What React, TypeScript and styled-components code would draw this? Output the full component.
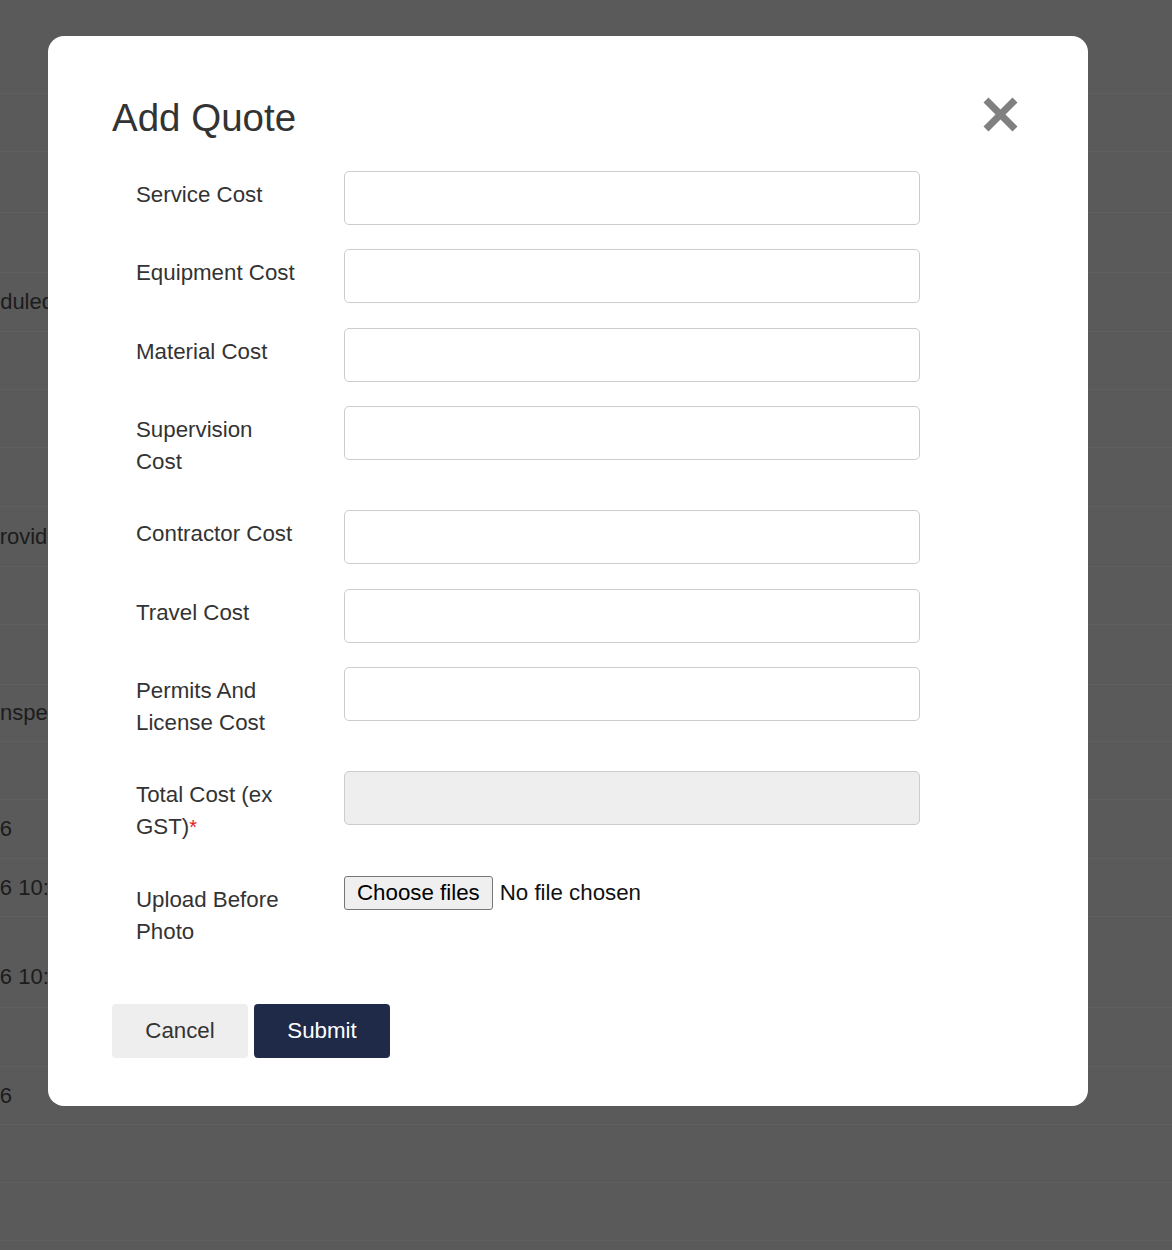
import React from "react";
import styled, { createGlobalStyle } from "styled-components";

const GlobalStyle = createGlobalStyle`
  html, body {
    margin: 0;
    padding: 0;
    background: #5a5a5a;
    font-family: "Liberation Sans", Arial, Helvetica, sans-serif;
  }
  * { box-sizing: border-box; }
`;

const Page = styled.div`
  position: relative;
  min-height: 1250px;
  overflow: hidden;
`;

const BackTable = styled.div`
  display: flex;
  flex-direction: column;
`;

const BackRow = styled.div<{ $h: number; $align?: string; $pb?: number }>`
  height: ${(p) => p.$h}px;
  display: flex;
  align-items: ${(p) => p.$align || "center"};
  padding-bottom: ${(p) => p.$pb || 0}px;
  border-bottom: 1px solid #606060;
`;

const BackText = styled.span<{ $shift: number }>`
  margin-left: ${(p) => -p.$shift}px;
  white-space: nowrap;
  font-size: 22px;
  line-height: 32px;
  color: #1c1c1c;
`;

const Overlay = styled.div`
  position: absolute;
  inset: 0;
  display: flex;
  align-items: flex-start;
  padding: 36px 0 0 48px;
`;

const Modal = styled.div`
  width: 1040px;
  background: #ffffff;
  border-radius: 16px;
  padding: 60px 64px 48px;
`;

const Header = styled.div`
  display: flex;
  justify-content: space-between;
  align-items: flex-start;
`;

const Title = styled.h2`
  margin: 0;
  font-size: 38.5px;
  line-height: 44px;
  font-weight: 400;
  color: #333333;
`;

const CloseButton = styled.button`
  border: none;
  background: transparent;
  padding: 0;
  margin: 1px 6px 0 0;
  width: 35px;
  height: 35px;
  cursor: pointer;
  display: flex;
`;

const Form = styled.form`
  margin-top: 31px;
  display: flex;
  flex-direction: column;
  gap: 24.35px;
`;

const Row = styled.div`
  display: flex;
  align-items: flex-start;
`;

const Label = styled.label`
  width: 232px;
  flex: none;
  padding: 8px 46px 8px 24px;
  min-height: 48px;
  font-size: 22.3px;
  line-height: 32px;
  color: #333333;
`;

const Required = styled.span`
  color: #e02020;
  font-size: 20px;
`;

const Input = styled.input<{ $disabled?: boolean }>`
  width: 576px;
  height: 54px;
  border: 1px solid #cccccc;
  border-radius: 5px;
  background: ${(p) => (p.$disabled ? "#eeeeee" : "#ffffff")};
  font-size: 20px;
  font-family: inherit;
  padding: 0 14px;
  outline: none;
`;

const FileField = styled.label`
  display: flex;
  align-items: center;
  gap: 7px;
  cursor: pointer;
`;

const HiddenFile = styled.input`
  display: none;
`;

const FileButton = styled.span`
  height: 34px;
  padding: 0 12px;
  display: flex;
  align-items: center;
  background: #efefef;
  border: 1px solid #767676;
  border-radius: 3px;
  font-size: 22.3px;
  color: #000000;
`;

const FileStatus = styled.span`
  font-size: 22.3px;
  color: #111111;
`;

const Actions = styled.div`
  display: flex;
  gap: 6px;
  margin-top: 48px;
`;

const Button = styled.button<{ $primary?: boolean }>`
  width: 136px;
  height: 54px;
  border: none;
  border-radius: 4px;
  font-family: inherit;
  font-size: 22.3px;
  cursor: pointer;
  background: ${(p) => (p.$primary ? "#1f2a48" : "#eeeeee")};
  color: ${(p) => (p.$primary ? "#ffffff" : "#333333")};
`;

const backRows: { h: number; text?: string; shift?: number; align?: string; pb?: number }[] = [
  { h: 94 },
  { h: 58 },
  { h: 61 },
  { h: 60 },
  { h: 59, text: "Scheduled", shift: 50 },
  { h: 58 },
  { h: 58 },
  { h: 59 },
  { h: 60, text: "Provided", shift: 15 },
  { h: 58 },
  { h: 60 },
  { h: 57, text: "Inspection", shift: 6 },
  { h: 58 },
  { h: 59, text: "15/01/2026", shift: 98 },
  { h: 58, text: "15/01/2026 10:30", shift: 98 },
  { h: 91, text: "15/01/2026 10:30", shift: 98, align: "flex-end", pb: 14 },
  { h: 59 },
  { h: 58, text: "16/01/2026", shift: 98 },
  { h: 58 },
  { h: 58 },
];

const fields: { label: string; required?: boolean; disabled?: boolean }[] = [
  { label: "Service Cost" },
  { label: "Equipment Cost" },
  { label: "Material Cost" },
  { label: "Supervision Cost" },
  { label: "Contractor Cost" },
  { label: "Travel Cost" },
  { label: "Permits And License Cost" },
  { label: "Total Cost (ex GST)", required: true, disabled: true },
];

const CloseIcon = () => (
  <svg width="35" height="35" viewBox="0 0 35 35">
    <line x1="3" y1="3" x2="32" y2="32" stroke="#808080" strokeWidth="7" />
    <line x1="32" y1="3" x2="3" y2="32" stroke="#808080" strokeWidth="7" />
  </svg>
);

export default function App() {
  return (
    <Page>
      <GlobalStyle />
      <BackTable>
        {backRows.map((r, i) => (
          <BackRow key={i} $h={r.h} $align={r.align} $pb={r.pb}>
            {r.text && <BackText $shift={r.shift || 0}>{r.text}</BackText>}
          </BackRow>
        ))}
      </BackTable>
      <Overlay>
        <Modal>
          <Header>
            <Title>Add Quote</Title>
            <CloseButton aria-label="Close">
              <CloseIcon />
            </CloseButton>
          </Header>
          <Form onSubmit={(e) => e.preventDefault()}>
            {fields.map((f) => (
              <Row key={f.label}>
                <Label>
                  {f.label}
                  {f.required && <Required>*</Required>}
                </Label>
                <Input type="text" $disabled={f.disabled} disabled={f.disabled} />
              </Row>
            ))}
            <Row>
              <Label>Upload Before Photo</Label>
              <FileField>
                <HiddenFile type="file" multiple />
                <FileButton>Choose files</FileButton>
                <FileStatus>No file chosen</FileStatus>
              </FileField>
            </Row>
          </Form>
          <Actions>
            <Button type="button">Cancel</Button>
            <Button type="button" $primary>
              Submit
            </Button>
          </Actions>
        </Modal>
      </Overlay>
    </Page>
  );
}
